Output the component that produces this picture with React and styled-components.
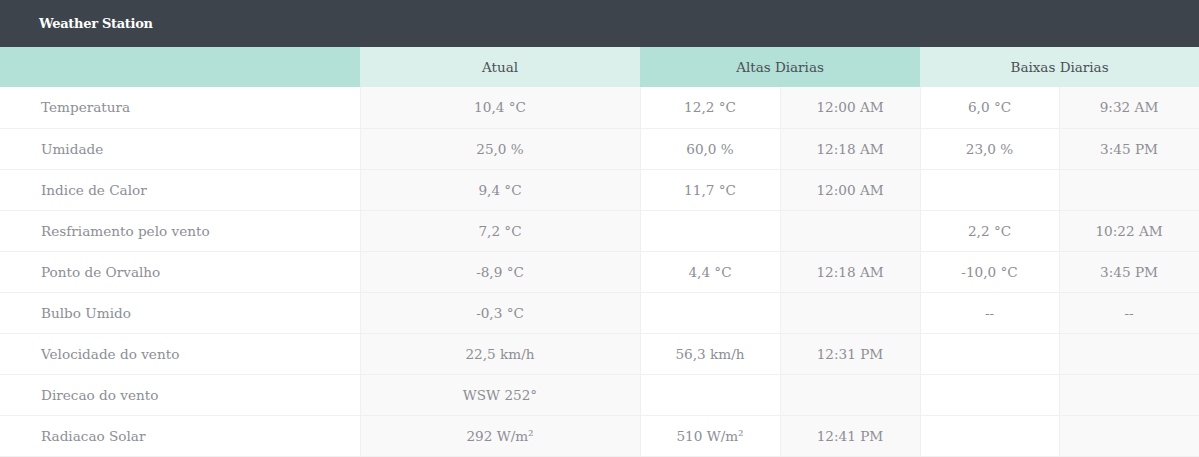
import React from "react";
import styled, { createGlobalStyle } from "styled-components";

const Global = createGlobalStyle`
  html, body { margin: 0; padding: 0; background: #ffffff; }
  body { font-family: "DejaVu Serif", "Liberation Serif", serif; }
`;

const Panel = styled.section`
  width: 1199px;
  background: #ffffff;
`;

const TitleBar = styled.header`
  height: 47px;
  background: #3d444c;
  display: flex;
  align-items: center;
  padding-left: 39px;
  box-sizing: border-box;
`;

const Title = styled.h1`
  margin: 0;
  color: #ffffff;
  font-size: 13px;
  font-weight: 700;
  letter-spacing: -0.3px;
`;

const Table = styled.table`
  width: 100%;
  border-collapse: collapse;
  table-layout: fixed;
`;

const HeadCell = styled.th`
  height: 40px;
  padding: 0;
  font-size: 13.5px;
  font-weight: 400;
  color: #4a4f55;
  text-align: center;
  background: ${(p) => (p.$light ? "#dcf0eb" : "#b3e1d7")};
`;

const Row = styled.tr`
  height: 41px;
  border-bottom: 1px solid #f0f0f0;
`;

const LabelCell = styled.td`
  padding: 0 0 0 41px;
  font-size: 13.6px;
  color: #8d8e94;
  text-align: left;
  background: #ffffff;
  border-right: 1px solid #f0f0f0;
`;

const ValueCell = styled.td`
  padding: 0;
  font-size: 13.6px;
  color: #8d8e94;
  text-align: center;
  background: ${(p) => (p.$shade ? "#f9f9f9" : "#ffffff")};
  border-right: 1px solid #f0f0f0;
  white-space: nowrap;
`;

const rows = [
  ["Temperatura", "10,4 °C", "12,2 °C", "12:00 AM", "6,0 °C", "9:32 AM"],
  ["Umidade", "25,0 %", "60,0 %", "12:18 AM", "23,0 %", "3:45 PM"],
  ["Indice de Calor", "9,4 °C", "11,7 °C", "12:00 AM", "", ""],
  ["Resfriamento pelo vento", "7,2 °C", "", "", "2,2 °C", "10:22 AM"],
  ["Ponto de Orvalho", "-8,9 °C", "4,4 °C", "12:18 AM", "-10,0 °C", "3:45 PM"],
  ["Bulbo Umido", "-0,3 °C", "", "", "--", "--"],
  ["Velocidade do vento", "22,5 km/h", "56,3 km/h", "12:31 PM", "", ""],
  ["Direcao do vento", "WSW 252°", "", "", "", ""],
  ["Radiacao Solar", "292 W/m²", "510 W/m²", "12:41 PM", "", ""],
];

export default function App() {
  return (
    <>
      <Global />
      <Panel>
        <TitleBar>
          <Title>Weather Station</Title>
        </TitleBar>
        <Table>
          <colgroup>
            <col style={{ width: 360 }} />
            <col style={{ width: 280 }} />
            <col style={{ width: 140 }} />
            <col style={{ width: 140 }} />
            <col style={{ width: 139 }} />
            <col style={{ width: 140 }} />
          </colgroup>
          <thead>
            <tr>
              <HeadCell />
              <HeadCell $light>Atual</HeadCell>
              <HeadCell colSpan={2}>Altas Diarias</HeadCell>
              <HeadCell colSpan={2} $light>Baixas Diarias</HeadCell>
            </tr>
          </thead>
          <tbody>
            {rows.map((r) => (
              <Row key={r[0]}>
                <LabelCell>{r[0]}</LabelCell>
                <ValueCell $shade>{r[1]}</ValueCell>
                <ValueCell>{r[2]}</ValueCell>
                <ValueCell $shade>{r[3]}</ValueCell>
                <ValueCell>{r[4]}</ValueCell>
                <ValueCell $shade>{r[5]}</ValueCell>
              </Row>
            ))}
          </tbody>
        </Table>
      </Panel>
    </>
  );
}
